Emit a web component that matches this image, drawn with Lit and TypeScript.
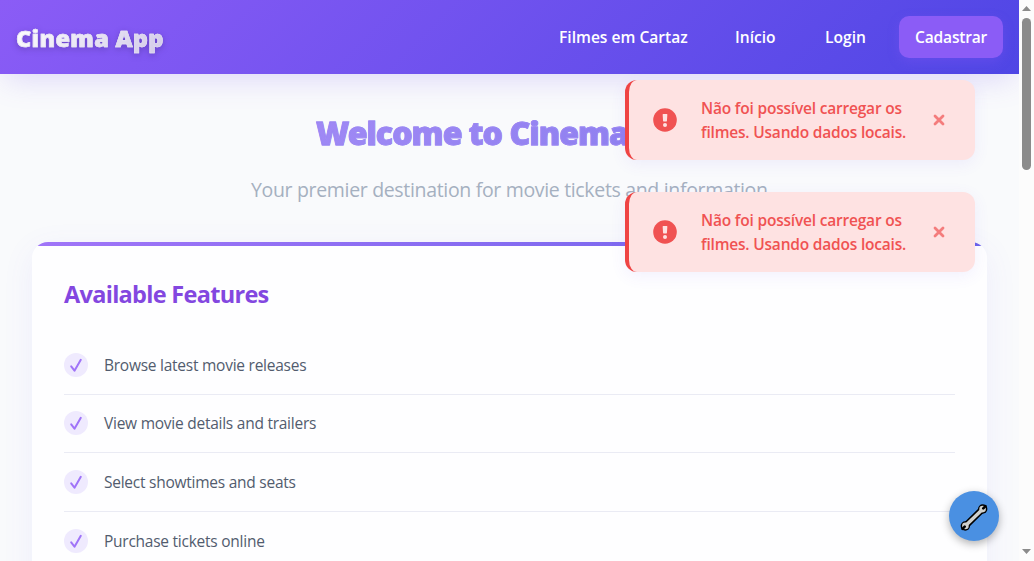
import { LitElement, html, css } from "lit";
import { customElement, property } from "lit/decorators.js";

@customElement("error-toast")
class ErrorToast extends LitElement {
  @property({ type: Array }) lines: string[] = [];
  static styles = css`
    :host { display: block; }
    .toast {
      box-sizing: border-box; width: 350px; height: 80px; display: flex; align-items: center;
      padding: 0 24px; background: #fee2e2; border-left: 4px solid #ef4444;
      border-radius: 12px; color: #f05252; box-shadow: 0 4px 16px rgba(99, 72, 237, 0.08);
    }
    .icon { width: 24px; height: 24px; flex: none; }
    .text { margin-left: 24px; width: 214px; font-size: 15.5px; font-weight: 600; line-height: 24px; white-space: nowrap; letter-spacing: -0.2px; }
    .close { width: 12px; height: 12px; margin-left: 18px; flex: none; }
  `;
  render() {
    return html`<div class="toast" role="alert">
      <svg class="icon" viewBox="0 0 24 24">
        <circle cx="12" cy="12" r="11.8" fill="#f05252" />
        <path d="M10.2 6h3.600q.6 0 .55.6l-.4 6.200q0 .6-.6.6h-2.700q-.6 0-.6-.6l-.4-6.200q0-.6.55-.6z" fill="#fee2e2" />
        <circle cx="12" cy="17" r="2" fill="#fee2e2" />
      </svg>
      <div class="text">${this.lines.map((l) => html`<div>${l}</div>`)}</div>
      <svg class="close" viewBox="0 0 12 12">
        <path d="M2 2l8 8M10 2l-8 8" stroke="#f47c7c" stroke-width="2.8" stroke-linecap="round" />
      </svg>
    </div>`;
  }
}

const features = [
  "Browse latest movie releases",
  "View movie details and trailers",
  "Select showtimes and seats",
  "Purchase tickets online",
];

@customElement("app-root")
class AppRoot extends LitElement {
  static styles = css`
    :host {
      display: block; height: 561px; overflow: hidden; position: relative;
      font-family: "Open Sans", "Noto Sans", sans-serif; background: #f9fafc;
    }
    .frame { display: flex; height: 561px; }
    .page { width: 1019px; flex: none; overflow: hidden; }
    .bar {
      box-sizing: border-box; height: 74px; padding: 0 16px; display: flex; align-items: center;
      justify-content: space-between; position: relative;
      background: linear-gradient(135deg, #8b5cf6, #4f46e5);
      box-shadow: 0 10px 30px -5px rgba(124, 92, 237, 0.22);
    }
    .brand {
      font-family: "Noto Sans", "Open Sans", sans-serif;
      font-size: 23.5px; font-weight: 900; line-height: 38px; letter-spacing: 0.3px; white-space: nowrap;
      -webkit-text-stroke: 0.6px #e6e2f2;
      margin-top: 2px; background: linear-gradient(135deg, #fff, #d1c9e8); -webkit-background-clip: text;
      background-clip: text; color: transparent; filter: drop-shadow(0 2px 3px rgba(40, 20, 90, 0.28));
    }
    nav { display: flex; align-items: center; gap: 16px; }
    .link {
      box-sizing: border-box; height: 42px; line-height: 42px; padding: 0 16px; color: #fff;
      font-size: 15.6px; font-weight: 600; white-space: nowrap; border-radius: 10px;
    }
    .l1 { width: 160px; } .l2 { width: 74px; } .l3 { width: 74px; }
    .cta { width: 104px; letter-spacing: -0.2px; background: #8b5cf6; box-shadow: 0 4px 12px rgba(139, 92, 246, 0.25); }
    .hero { height: 167.6px; text-align: center; }
    h1 {
      font-family: "Noto Sans", "Open Sans", sans-serif;
      margin: 0 auto; padding-top: 35px; width: 387px; font-size: 32px; line-height: 48px; font-weight: 900;
      white-space: nowrap; text-align: left; letter-spacing: -0.95px;
      -webkit-text-stroke: 0.8px #9a87f3;
      background: linear-gradient(135deg, #a28af6, #8b7eee); -webkit-background-clip: text;
      background-clip: text; color: transparent;
    }
    .lead { margin: 17px auto 0; width: 517px; text-align: left; white-space: nowrap; font-size: 19.5px; letter-spacing: -0.33px; line-height: 32px; color: #a5b0c0; }
    .shade { margin: 0 32px; border-radius: 16px; box-shadow: 0 8px 32px rgba(99, 92, 237, 0.08); }
    .card {
      box-sizing: border-box; height: 400px; border-radius: 16px; overflow: hidden;
      background: #fefeff;
    }
    .stripe { height: 4px; background: linear-gradient(90deg, #a075f8, #6a62ea); }
    .body { padding: 29px 32px 0; }
    h2 { margin: 0; font-size: 23.5px; line-height: 38px; font-weight: 700; letter-spacing: -0.7px; color: #8347e0; white-space: nowrap; }
    ul { list-style: none; margin: 23.4px 0 0; padding: 0; }
    li {
      box-sizing: border-box; height: 58.6px; display: flex; align-items: center; gap: 16px;
      border-bottom: 1px solid #eaebf4; font-size: 15.5px; letter-spacing: -0.25px; color: #525c6e; white-space: nowrap;
    }
    .check { width: 24px; height: 24px; flex: none; }
    .toasts { position: absolute; left: 625px; top: 80px; display: flex; flex-direction: column; gap: 32px; }
    .fab {
      position: absolute; left: 949px; top: 491px; width: 50px; height: 50px; border-radius: 50%;
      background: #4a90e2; box-shadow: 0 3px 8px rgba(0, 0, 0, 0.3);
    }
    .fab svg, .track svg { display: block; }
    .track { width: 15px; flex: none; background: #fcfcfc; }
  `;
  render() {
    const msg = ["Não foi possível carregar os", "filmes. Usando dados locais."];
    return html`
      <div class="frame">
        <div class="page">
          <header class="bar">
            <div class="brand">Cinema App</div>
            <nav>
              <a class="link l1">Filmes em Cartaz</a><a class="link l2">Início</a>
              <a class="link l3">Login</a><a class="link cta">Cadastrar</a>
            </nav>
          </header>
          <section class="hero">
            <h1>Welcome to Cinema App</h1>
            <p class="lead">Your premier destination for movie tickets and information</p>
          </section>
          <div class="shade"><section class="card">
            <div class="stripe"></div>
            <div class="body">
              <h2>Available Features</h2>
              <ul>
                ${features.map((t) => html`<li>
                  <svg class="check" viewBox="0 0 24 24">
                    <circle cx="12" cy="12" r="12" fill="#efeafe" />
                    <path d="M7.200 13.300l3.300 4.400L16.800 6.800" fill="none" stroke="#a074f8" stroke-width="2" stroke-linecap="round" stroke-linejoin="round" />
                  </svg><span>${t}</span></li>`)}
              </ul>
            </div>
          </section></div>
        </div>
        <div class="track">
          <svg width="15" height="561" viewBox="0 0 15 561">
            <path d="M3 11l4.500-5 4.500 5zM3 549h9l-4.500 5z" fill="#8b8b8b" />
            <rect x="3" y="18" width="9" height="152" rx="4.5" fill="#8b8b8b" />
          </svg>
        </div>
      </div>
      <div class="toasts">
        <error-toast .lines=${msg}></error-toast>
        <error-toast .lines=${msg}></error-toast>
      </div>
      <div class="fab">
        <svg width="50" height="50" viewBox="0 0 50 50">
          <g stroke="#000" stroke-linecap="round">
            <circle cx="33.700" cy="18" r="4.700" fill="#000" stroke="none" />
            <circle cx="16.300" cy="35" r="4.700" fill="#000" stroke="none" />
            <path d="M18 33.300L32 19.700" stroke-width="6.600" />
            <path d="M18 33.300L32 19.700" stroke="#d0d0cc" stroke-width="3.400" />
            <circle cx="33.600" cy="18.100" r="3.300" fill="#d0d0cc" stroke="none" />
            <circle cx="16.400" cy="34.900" r="3.300" fill="#d0d0cc" stroke="none" />
            <path d="M34.300 17.400L36.500 15.200M15.700 35.600L13.500 37.800" stroke-width="2.600" />
          </g>
        </svg>
      </div>`;
  }
}
